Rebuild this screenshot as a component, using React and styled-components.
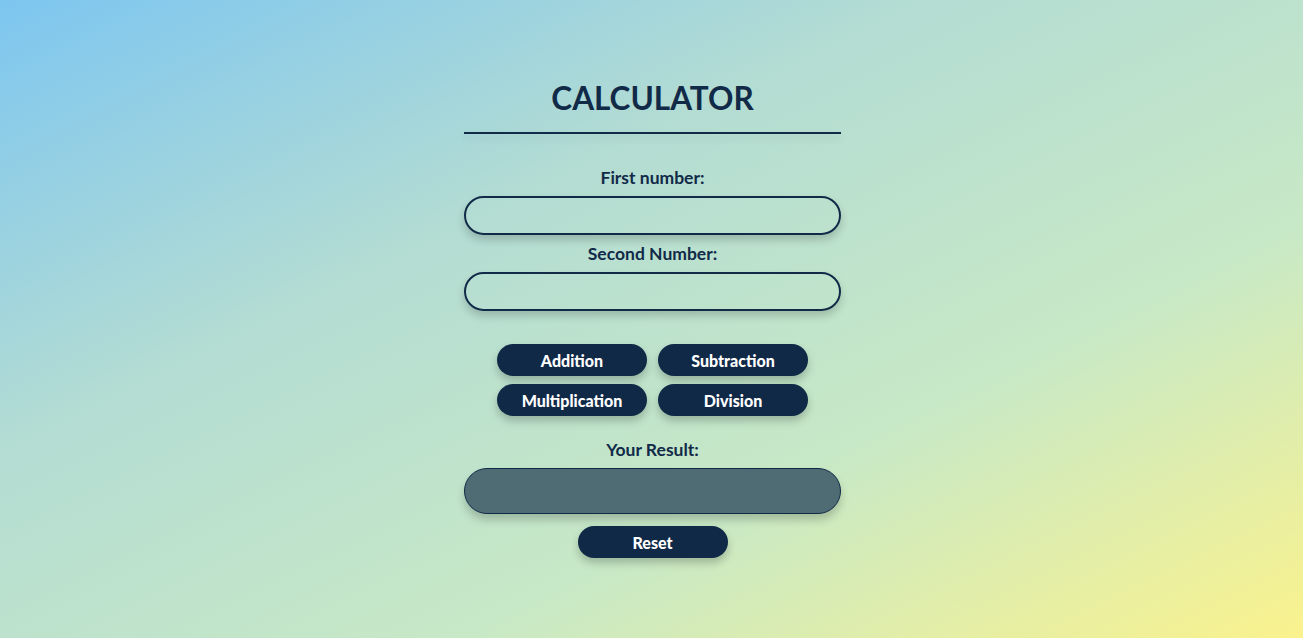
import React, { useState } from 'react';
import styled, { createGlobalStyle } from 'styled-components';

const GlobalStyle = createGlobalStyle`
  html, body {
    margin: 0;
    padding: 0;
  }
  body {
    font-family: Lato, "Open Sans", sans-serif;
    color: #112a48;
  }
`;

const Page = styled.div`
  min-height: 100vh;
  background: linear-gradient(to bottom right, #7dc6f0 0%, #b3dcd3 35%, #c8e9c6 68%, #faf28d 100%);
  display: flex;
  justify-content: center;
  padding-left: 2px;
`;

const Calc = styled.div`
  width: 377px;
  padding-top: 78px;
  display: flex;
  flex-direction: column;
  align-items: center;
`;

const Title = styled.h1`
  margin: 0;
  font-size: 31.5px;
  font-weight: 700;
  letter-spacing: 0;
  line-height: 40px;
`;

const Line = styled.div`
  width: 100%;
  height: 2px;
  margin-top: 14px;
  background: #112a48;
  box-shadow: 0 4px 8px rgba(0, 0, 0, 0.12);
`;

const Label = styled.label`
  font-size: 17.5px;
  font-weight: 700;
  line-height: 22px;
  margin-top: ${p => p.$top}px;
  margin-bottom: 7px;
`;

const Field = styled.input`
  box-sizing: border-box;
  width: 100%;
  height: 39px;
  border: 2px solid #112a48;
  border-radius: 20px;
  background: transparent;
  box-shadow: 0 5px 8px rgba(0, 0, 0, 0.18);
  padding: 0 16px;
  font-family: inherit;
  font-size: 16px;
  color: #112a48;
  outline: none;
`;

const Ops = styled.div`
  display: grid;
  grid-template-columns: 150px 150px;
  column-gap: 11px;
  row-gap: 8px;
  margin-top: 33px;
`;

const Btn = styled.button`
  height: 32px;
  width: 150px;
  border: none;
  border-radius: 16px;
  background: #102947;
  color: #fff;
  font-family: inherit;
  font-size: 16px;
  font-weight: 900;
  box-shadow: 0 5px 8px rgba(0, 0, 0, 0.22);
  cursor: pointer;
  margin-top: ${p => p.$top || 0}px;
`;

const Result = styled.div`
  box-sizing: border-box;
  width: 100%;
  height: 46px;
  border: 1px solid #112a48;
  border-radius: 23px;
  background: #4f6b73;
  box-shadow: 0 6px 9px rgba(0, 0, 0, 0.2);
  display: flex;
  align-items: center;
  justify-content: center;
  color: #fff;
  font-size: 18px;
  font-weight: 700;
`;

export default function App() {
  const [a, setA] = useState('');
  const [b, setB] = useState('');
  const [result, setResult] = useState('');

  const run = (op) => {
    const x = parseFloat(a);
    const y = parseFloat(b);
    if (isNaN(x) || isNaN(y)) return;
    if (op === '+') setResult(x + y);
    if (op === '-') setResult(x - y);
    if (op === '*') setResult(x * y);
    if (op === '/') setResult(y === 0 ? 'Error' : x / y);
  };

  const reset = () => {
    setA('');
    setB('');
    setResult('');
  };

  return (
    <Page>
      <GlobalStyle />
      <Calc>
        <Title>CALCULATOR</Title>
        <Line />
        <Label $top={33}>First number:</Label>
        <Field type="number" value={a} onChange={e => setA(e.target.value)} />
        <Label $top={8}>Second Number:</Label>
        <Field type="number" value={b} onChange={e => setB(e.target.value)} />
        <Ops>
          <Btn onClick={() => run('+')}>Addition</Btn>
          <Btn onClick={() => run('-')}>Subtraction</Btn>
          <Btn onClick={() => run('*')}>Multiplication</Btn>
          <Btn onClick={() => run('/')}>Division</Btn>
        </Ops>
        <Label $top={23}>Your Result:</Label>
        <Result>{result}</Result>
        <Btn $top={12} onClick={reset}>Reset</Btn>
      </Calc>
    </Page>
  );
}
